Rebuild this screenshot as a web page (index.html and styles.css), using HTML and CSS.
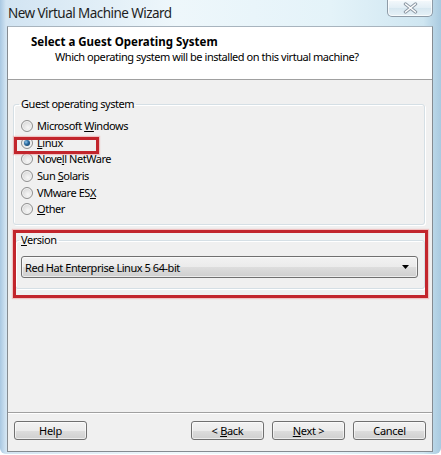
FILE: index.html
```html
<!DOCTYPE html>
<html>
<head>
<meta charset="utf-8">
<link rel="stylesheet" href="styles.css">
</head>
<body>
<div class="window">
  <div class="titlebar">
    <span class="title">New Virtual Machine Wizard</span>
    <div class="close">
      <svg width="15" height="12" viewBox="0 0 15 12">
        <path d="M2.5 2 L12.5 10 M12.5 2 L2.5 10" stroke="#8b97a3" stroke-width="3.4" stroke-linecap="round"/>
        <path d="M2.5 2 L12.5 10 M12.5 2 L2.5 10" stroke="#ffffff" stroke-width="1.5" stroke-linecap="round"/>
      </svg>
    </div>
  </div>
  <div class="client">
    <div class="header">
      <div class="h-title">Select a Guest Operating System</div>
      <div class="h-sub">Which operating system will be installed on this virtual machine?</div>
    </div>
    <div class="body">
      <fieldset class="group guest">
        <legend>Guest operating system</legend>
        <div class="radio"><span class="dot"></span><span>Microsoft <u>W</u>indows</span></div>
        <div class="radio"><span class="dot on"></span><span><u>L</u>inux</span></div>
        <div class="radio"><span class="dot"></span><span>Nove<u>l</u>l NetWare</span></div>
        <div class="radio"><span class="dot"></span><span>Sun <u>S</u>olaris</span></div>
        <div class="radio"><span class="dot"></span><span>VMware ES<u>X</u></span></div>
        <div class="radio"><span class="dot"></span><span><u>O</u>ther</span></div>
      </fieldset>
      <fieldset class="group version">
        <legend><u>V</u>ersion</legend>
        <div class="combo">
          <span>Red Hat Enterprise Linux 5 64-bit</span>
          <svg class="arrow" width="7" height="4" viewBox="0 0 7 4"><path d="M0 0 H7 L3.5 4 Z" fill="#000"/></svg>
        </div>
      </fieldset>
    </div>
    <div class="footer">
      <button class="btn">Help</button>
      <div class="spacer"></div>
      <button class="btn">&lt; <u>B</u>ack</button>
      <button class="btn"><u>N</u>ext &gt;</button>
      <button class="btn">Cancel</button>
    </div>
  </div>
  <div class="annot annot-linux"></div>
  <div class="annot annot-version"></div>
</div>
</body>
</html>
```

FILE: styles.css
```css
* { box-sizing: border-box; }
html, body { margin: 0; padding: 0; }
body {
  width: 441px;
  height: 455px;
  background: #ffffff;
  font-family: "Noto Sans", "Open Sans", sans-serif;
  font-size: 11px;
  letter-spacing: -0.45px;
  color: #000;
  overflow: hidden;
}
.window {
  position: relative;
  width: 441px;
  height: 454px;
  background: linear-gradient(to right, #a9c8e2 0px, #d2e4f2 6px, #eef7fb 40%, #e4f3f9 75%, #cfe6f1 96%, #a9cae0 100%);
  border-radius: 0 0 6px 6px;
  display: flex;
  flex-direction: column;
}
.titlebar {
  height: 26px;
  display: flex;
  align-items: flex-start;
  padding-left: 8px;
}
.title {
  font-size: 13.5px;
  line-height: 14px;
  margin-top: 6px;
  color: #1e1e1e;
  letter-spacing: -0.55px;
}
.close {
  margin-left: auto;
  margin-right: 8px;
  width: 46px;
  height: 17px;
  border: 1px solid #8e9ba7;
  border-top: none;
  border-radius: 0 0 5px 5px;
  background: linear-gradient(#f4f9fc, #e2eef5 50%, #d7e7f0 51%, #e6f1f7);
  display: flex;
  align-items: center;
  justify-content: center;
  box-shadow: inset 0 0 0 1px rgba(255,255,255,0.7);
}
.client {
  margin: 0 8px 0 7px;
  height: 426px;
  border: 1px solid #858b91;
  border-top-color: #a8b4be;
  background: #f0f0f0;
  display: flex;
  flex-direction: column;
}
.header {
  height: 53px;
  background: #ffffff;
  border-bottom: 1px solid #a0a0a0;
  padding: 7px 0 0 23px;
}
.h-title {
  font-weight: bold;
  font-size: 11.5px;
  line-height: 15px;
  letter-spacing: 0;
}
.h-sub {
  padding-left: 24px;
  line-height: 15px;
}
.body {
  display: flex;
  flex-direction: column;
  padding: 0 7px 0 5px;
}
.group {
  margin: 0;
  border: 1px solid #d5dfe5;
  border-radius: 3px;
  box-shadow: inset 1px 1px 0 #ffffff, 1px 1px 0 #ffffff;
  padding: 0 8px 0 7px;
  min-width: 0;
}
.group legend {
  padding: 0 2px;
  margin-left: -2px;
  line-height: 14px;
  height: 14px;
}
.guest {
  margin-top: 17px;
  height: 128px;
  padding-top: 7px;
}
.radio {
  height: 16.6px;
  display: flex;
  align-items: center;
  gap: 4px;
  line-height: 14px;
}
.dot {
  width: 12px;
  height: 12px;
  border-radius: 50%;
  border: 1px solid #8f8f8f;
  background: radial-gradient(circle at 60% 65%, #f7f7f7 0%, #e0e0e0 55%, #c9c9c9 100%);
  box-shadow: inset 0 0 0 1px #f4f4f4;
  display: inline-flex;
  align-items: center;
  justify-content: center;
  flex: none;
}
.dot.on::after {
  content: "";
  width: 6px;
  height: 6px;
  border-radius: 50%;
  background: radial-gradient(circle at 35% 35%, #8fc4ea 0%, #2d6ea3 40%, #0d2f4e 100%);
}
.version {
  margin-top: 8px;
  height: 56px;
  margin-left: 2px;
  padding: 0 6px 0 5px;
}
.combo {
  margin-top: 9px;
  height: 22px;
  border: 1px solid #707070;
  border-radius: 3px;
  background: linear-gradient(#f2f2f2 0%, #ebebeb 50%, #dddddd 51%, #cfcfcf 100%);
  box-shadow: inset 0 0 0 1px rgba(255,255,255,0.6);
  display: flex;
  align-items: center;
  padding: 0 8px 0 3px;
  font-size: 11px;
}
.combo .arrow { margin-left: auto; }
.footer {
  margin-top: auto;
  border-top: 1px solid #a0a0a0;
  box-shadow: inset 0 1px 0 #ffffff;
  height: 39px;
  display: flex;
  align-items: flex-start;
  padding: 8px 6px 0 6px;
  gap: 8px;
}
.spacer { flex: 1; }
.btn {
  width: 73px;
  height: 19px;
  font-family: inherit;
  font-size: 11px;
  letter-spacing: -0.3px;
  color: #000;
  border: 1px solid #707070;
  border-radius: 3px;
  background: linear-gradient(#f2f2f2 0%, #ebebeb 50%, #dddddd 51%, #cfcfcf 100%);
  box-shadow: inset 0 0 0 1px rgba(255,255,255,0.6);
  padding: 0;
  line-height: 15px;
}
.annot {
  position: absolute;
  border: 3px solid #c2252c;
  box-shadow: 0 0 1px 1px rgba(240,150,150,0.5);
}
.annot-linux {
  left: 14px;
  top: 137px;
  width: 85px;
  height: 17px;
}
.annot-version {
  left: 13px;
  top: 230px;
  width: 415px;
  height: 68px;
}
```
